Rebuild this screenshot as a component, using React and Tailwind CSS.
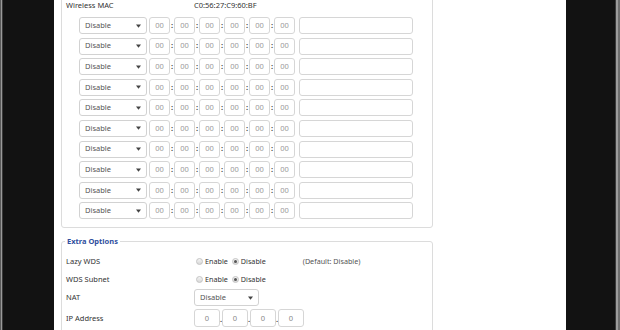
import React from "react";

const font = { fontFamily: '"Noto Sans", "Open Sans", sans-serif' };

const Arrow = () => (
  <svg width="5" height="4" viewBox="0 0 5 4" className="shrink-0">
    <path d="M0 0.5 L5 0.5 L2.5 3.8 Z" fill="#444" />
  </svg>
);

const Select = ({ w }) => (
  <div
    className={`flex h-full items-center justify-between rounded-[3px] border border-[#d2d2d2] bg-white pl-[5px] pr-[5px] text-[#555] ${w}`}
  >
    <span>Disable</span>
    <Arrow />
  </div>
);

const Octet = () => (
  <div className="flex h-full w-[21px] items-center justify-center rounded-[3px] border border-[#d6d6d6] bg-white text-[#9a9a9a]">
    00
  </div>
);

const Colon = () => (
  <div className="flex w-[4px] items-center justify-center font-bold text-[#333]">:</div>
);

const MacRow = () => (
  <div className="flex h-[17px] items-stretch pl-[17px]">
    <Select w="w-[68px]" />
    <div className="ml-[2px] flex">
      {[0, 1, 2, 3, 4, 5].map((i) => (
        <React.Fragment key={i}>
          {i > 0 && <Colon />}
          <Octet />
        </React.Fragment>
      ))}
    </div>
    <div className="ml-[4px] w-[114px] rounded-[3px] border border-[#d6d6d6] bg-white" />
  </div>
);

const Radio = ({ checked }) => (
  <span className="flex h-[7px] w-[7px] items-center justify-center rounded-full border border-[#c4c4c4] bg-gradient-to-b from-[#f4f4f4] to-[#d8d8d8]">
    {checked && <span className="h-[3px] w-[3px] rounded-full bg-[#555]" />}
  </span>
);

const RadioPair = () => (
  <div className="flex items-center text-[7.2px] text-[#333]">
    <Radio />
    <span className="ml-[2px]">Enable</span>
    <span className="ml-[4px]">
      <Radio checked />
    </span>
    <span className="ml-[2px]">Disable</span>
  </div>
);

export default function App() {
  return (
    <div className="flex h-[330px] w-[620px] overflow-hidden bg-[#121212]" style={font}>
      <div className="flex w-[3px]">
        <div className="w-[1px] bg-[#5a5a5a]" />
        <div className="w-[1px] bg-[#9a9a9a]" />
        <div className="w-[1px] bg-[#3a3a3a]" />
      </div>
      <div className="w-[51px]" />
      <div className="h-full w-[512px] overflow-hidden bg-white pl-[7px] text-[7.5px] text-[#333]">
        <div className="-mt-[8px] w-[372px] rounded-[3px] border border-[#dcdcdc] pb-[8px] pt-[7px]">
          <div className="flex h-[12px] items-center pl-[4px]">
            <span className="w-[128px]">Wireless MAC</span>
            <span>C0:56:27:C9:60:BF</span>
          </div>
          <div className="mt-[5px] flex flex-col gap-[3.6px]">
            {Array.from({ length: 10 }).map((_, i) => (
              <MacRow key={i} />
            ))}
          </div>
        </div>

        <div className="relative mt-[13px] w-[372px] rounded-[3px] border border-[#dcdcdc] pl-[4px] pt-[12px]">
          <div className="absolute -top-[6px] left-[3px] bg-white px-[2px] text-[7.5px] font-bold leading-[11px] text-[#2f4f9e]">
            Extra Options
          </div>
          <div className="flex h-[14px] items-center">
            <span className="w-[128px]">Lazy WDS</span>
            <div className="ml-[2px]">
              <RadioPair />
            </div>
            <span className="ml-[37px] text-[7.2px] text-[#555]">(Default: Disable)</span>
          </div>
          <div className="mt-[4px] flex h-[14px] items-center">
            <span className="w-[128px]">WDS Subnet</span>
            <div className="ml-[2px]">
              <RadioPair />
            </div>
          </div>
          <div className="mt-[3px] flex h-[17px] items-stretch">
            <span className="flex w-[128px] items-center">NAT</span>
            <Select w="w-[65px]" />
          </div>
          <div className="mt-[3px] flex h-[18px] items-stretch">
            <span className="flex w-[128px] items-center">IP Address</span>
            <div className="flex">
              {[0, 1, 2, 3].map((i) => (
                <React.Fragment key={i}>
                  {i > 0 && (
                    <div className="flex w-[2px] items-end justify-center pb-[2px] font-bold text-[#333]">.</div>
                  )}
                  <div className="flex w-[26px] items-center justify-center rounded-[3px] border border-[#d6d6d6] text-[#888]">
                    0
                  </div>
                </React.Fragment>
              ))}
            </div>
          </div>
          <div className="mt-[3px] flex h-[18px] items-stretch">
            <span className="w-[128px]" />
            <div className="flex gap-[2px]">
              {[0, 1, 2, 3].map((i) => (
                <div key={i} className="w-[26px] rounded-[3px] border border-[#d6d6d6]" />
              ))}
            </div>
          </div>
        </div>
      </div>
      <div className="w-[49px]" />
      <div className="flex w-[5px]">
        <div className="w-[1px] bg-[#3a3a3a]" />
        <div className="w-[2px] bg-[#9c9c9c]" />
        <div className="w-[2px] bg-[#6e6e6e]" />
      </div>
    </div>
  );
}
